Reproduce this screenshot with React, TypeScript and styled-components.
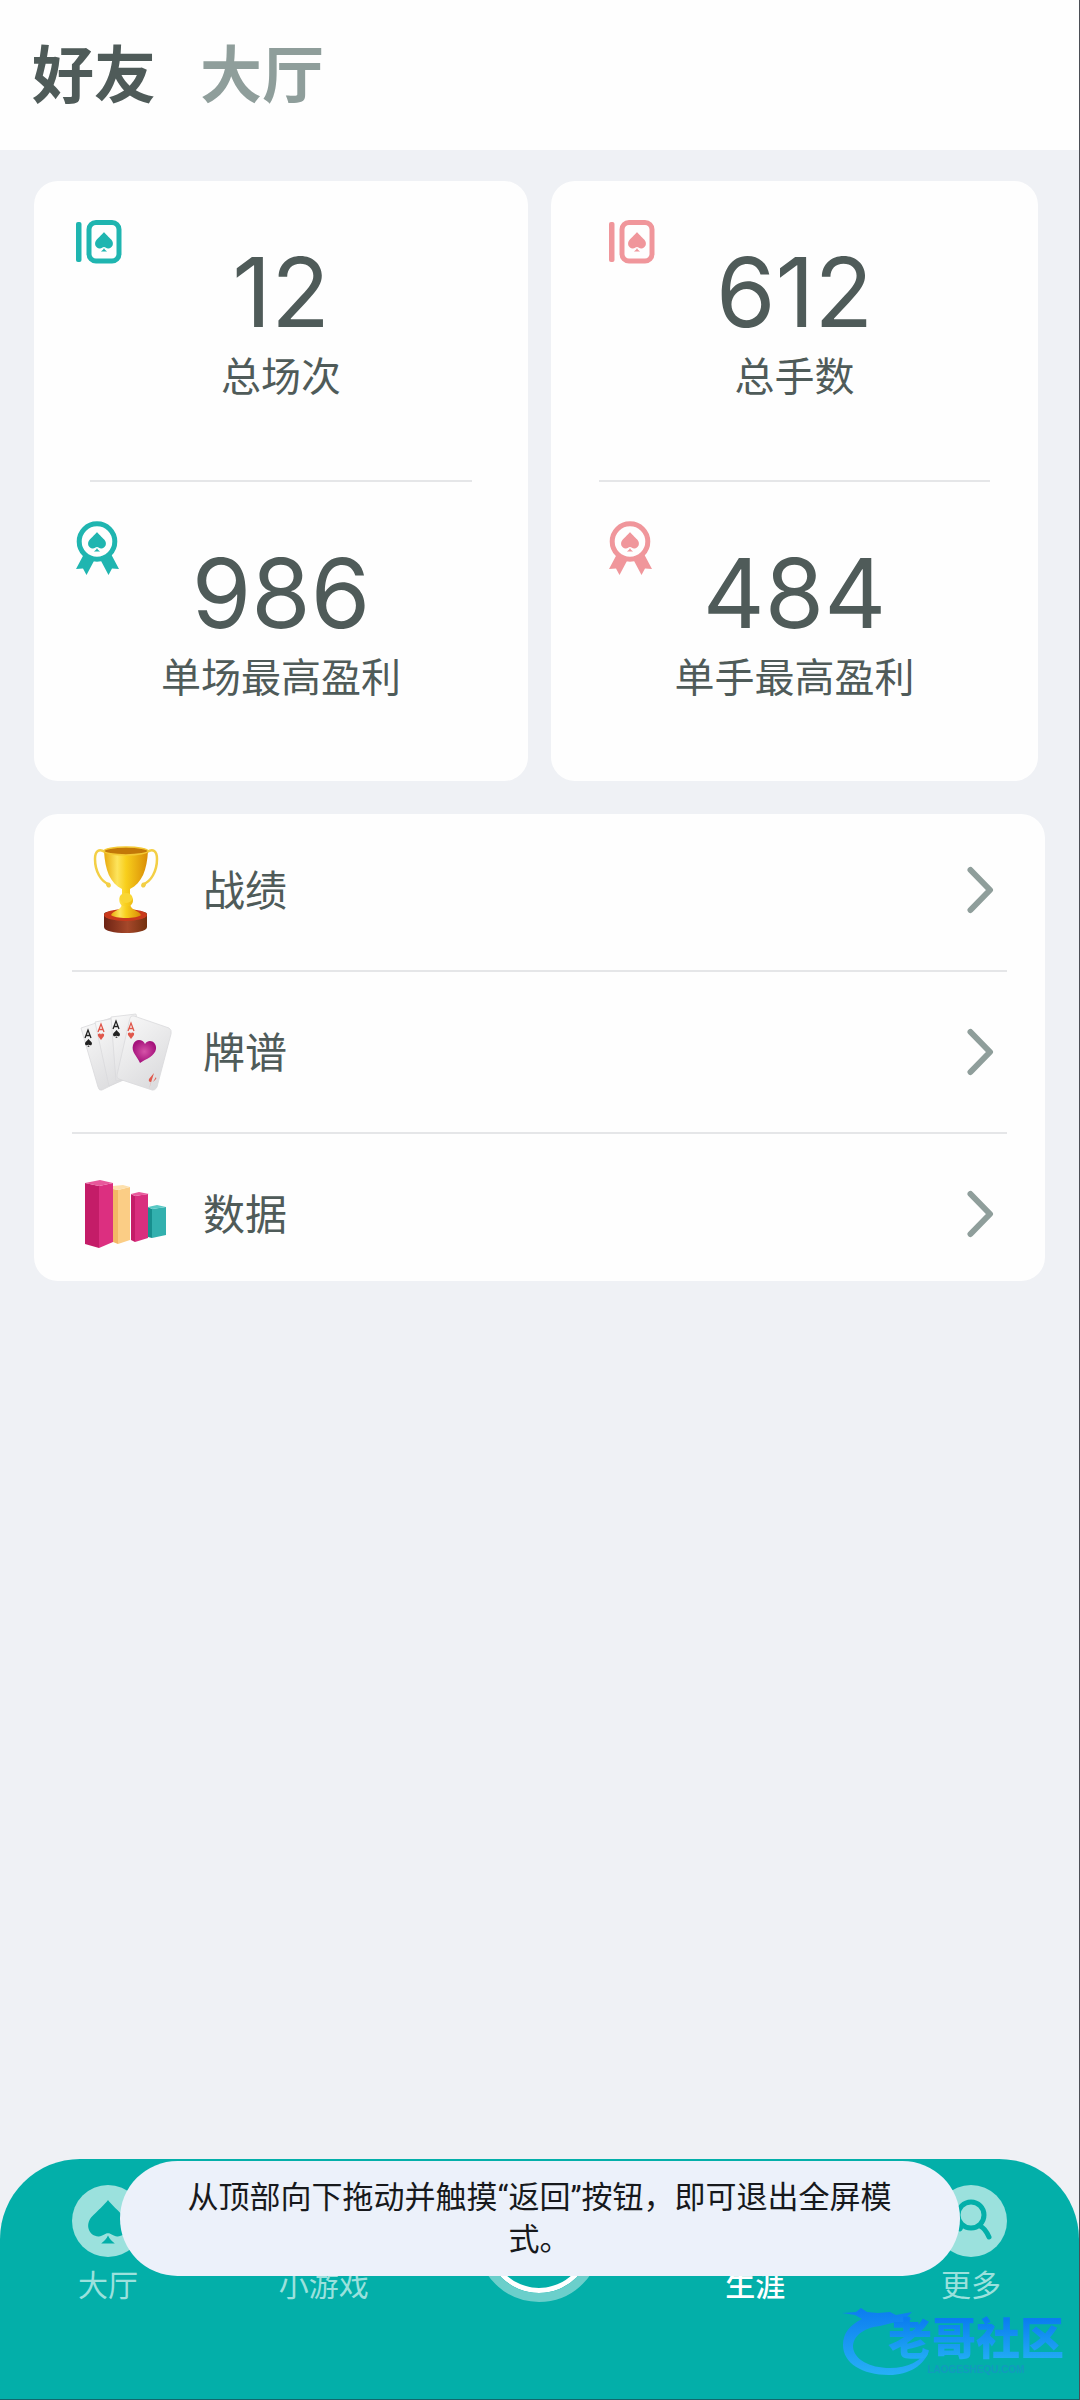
import React from 'react';
import styled, { createGlobalStyle } from 'styled-components';

const cjk = `"Noto Sans CJK SC", sans-serif`;
const ink = '#4f5b59';
const muted = '#8f9e9b';
const teal = '#03afa9';
const mint = '#9be1dd';

const GlobalStyle = createGlobalStyle`
  *, *::before, *::after { box-sizing: border-box; }
  body { margin: 0; background: #eff1f5; font-family: ${cjk}; color: ${ink}; }
  h1, p, ul, dl, dd, dt { margin: 0; padding: 0; font-weight: 400; }
  ul { list-style: none; }
  button { border: 0; padding: 0; background: none; font: inherit; color: inherit; cursor: pointer; }
  svg { display: block; flex: none; }
`;

const Page = styled.div`
  position: relative;
  display: flex;
  flex-direction: column;
  min-height: 100vh;
  border-right: 1px solid #4b4e55;
  background: #eff1f5;
`;

const Header = styled.header`
  display: flex;
  align-items: center;
  gap: 44px;
  height: 150px;
  padding: 0 32px 8px;
  background: #fefefe;
`;

const TopTab = styled.button<{ $active?: boolean }>`
  font-size: 62px;
  line-height: 80px;
  font-weight: 700;
  color: ${p => (p.$active ? ink : muted)};
`;

const Main = styled.main`
  flex: 1;
  padding: 31px 34px;
`;

const Cards = styled.section`
  display: grid;
  grid-template-columns: 494fr 487fr;
  gap: 23px;
  margin-right: 7px;
`;

const Card = styled.dl<{ $iconInset: number; $lineInset: number }>`
  border-radius: 24px;
  background: #fefefe;
  --icon-inset: ${p => p.$iconInset}px;
  --line-inset: ${p => p.$lineInset}px;
`;

const Divider = styled.div`
  height: 2px;
  margin: 0 var(--line-inset);
  background: #e5e6e8;
`;

const Stat = styled.div`
  display: grid;
  height: 299px;
  padding-top: 39px;
`;

const StatIcon = styled.div<{ $color: string }>`
  grid-area: 1 / 1;
  justify-self: start;
  align-self: start;
  padding-left: var(--icon-inset);
  color: ${p => p.$color};
`;

const StatText = styled.div`
  grid-area: 1 / 1;
  display: flex;
  flex-direction: column-reverse;
  justify-content: flex-end;
  align-items: center;
  gap: 8px;
  padding-top: 22px;
`;

const Value = styled.dd`
  font-family: Inter, sans-serif;
  font-size: 96px;
  line-height: 100px;
`;

const Label = styled.dt`
  font-size: 40px;
  line-height: 48px;
`;

const List = styled.ul`
  margin-top: 33px;
  padding: 44px 38px 35px;
  border-radius: 24px;
  background: #fefefe;
`;

const Item = styled.li`
  & + & {
    margin-top: 48px;
    padding-top: 48px;
    border-top: 2px solid #e5e6e8;
  }
`;

const Row = styled.button`
  display: flex;
  align-items: center;
  width: 100%;
  height: 64px;
  padding: 0 13px 0 8px;
  text-align: left;
`;

const Picture = styled.span`
  display: flex;
  align-items: center;
  justify-content: center;
  width: 92px;
`;

const RowText = styled.span`
  flex: 1;
  padding: 0 0 4px 31px;
  font-size: 42px;
  line-height: 60px;
`;

const Nav = styled.nav`
  display: grid;
  grid-template-columns: repeat(5, 1fr);
  align-items: start;
  height: 241px;
  padding-top: 26px;
  border-radius: 80px 80px 0 0;
  border-bottom: 1px solid #14666c;
  background: ${teal};
`;

const NavItem = styled.button<{ $active?: boolean }>`
  display: flex;
  flex-direction: column;
  align-items: center;
  gap: 6px;
  font-size: 30px;
  line-height: 40px;
  font-weight: ${p => (p.$active ? 500 : 400)};
  color: ${p => (p.$active ? '#fff' : mint)};
`;

const PlayButton = styled.button`
  justify-self: center;
  width: 124px;
  height: 124px;
  margin-top: -7px;
  border: 9px solid #6bcfcb;
  border-radius: 50%;
  background: ${teal};
  box-shadow: inset 0 0 0 5px #fff;
`;

const Toast = styled.div`
  position: absolute;
  left: 50%;
  bottom: 124px;
  width: min(840px, 90%);
  transform: translateX(-50%);
  padding: 16px 56px 15px;
  border-radius: 58px;
  background: #ecf1fa;
  color: #17191c;
  font-family: Roboto, ${cjk};
  font-size: 31px;
  line-height: 42px;
  text-align: center;
`;

const Watermark = styled.div`
  position: absolute;
  right: 15px;
  bottom: 24px;
  display: flex;
  align-items: flex-end;
`;

const WatermarkText = styled.div`
  margin-left: -44px;
  text-align: center;
`;

const WatermarkName = styled.p`
  font-size: 44px;
  line-height: 56px;
  font-weight: 900;
  color: transparent;
  background: linear-gradient(#0b7df0 20%, #22aaf4 90%);
  background-clip: text;
`;

const WatermarkSite = styled.p`
  font: 700 10px/12px "Liberation Sans", sans-serif;
  color: #129bbd;
`;

const Spade = ({ x, y, size }: { x: number; y: number; size: number }) => (
  <g transform={`translate(${x} ${y}) scale(${size / 20})`} fill="currentColor">
    <path d="M10 0C11 1.600 16 6.200 18 8.300C22 12.600 19.200 18.400 14.600 18.200C12.500 18 11.600 16.600 10 16.600C8.400 16.600 7.500 18 5.400 18.200C0.800 18.400-2 12.600 2 8.300C4 6.200 9 1.600 10 0Z" />
    <path d="M10 17.800C10.800 19.800 12 20.600 13.400 21.800H6.600C8 20.600 9.200 19.800 10 17.800Z" />
  </g>
);

const DeckIcon = () => (
  <svg width="46" height="44" viewBox="0 0 46 44">
    <rect x="0" y="2" width="5.500" height="40" rx="2" fill="currentColor" />
    <rect x="13" y="2.500" width="30" height="38.500" rx="7" fill="none" stroke="currentColor" strokeWidth="5" />
    <Spade x={19} y={12} size={18} />
  </svg>
);

const MedalIcon = () => (
  <svg width="43" height="54" viewBox="0 0 43 54">
    <path d="M8 33L0 48L7 47.500L10.500 54L19 38ZM35 33L43 48L36 47.500L32.500 54L24 38Z" fill="currentColor" />
    <circle cx="21" cy="20.500" r="17.800" fill="#fefefe" stroke="currentColor" strokeWidth="5" />
    <Spade x={12} y={11} size={18} />
  </svg>
);

const TrophyIcon = () => (
  <svg width="66" height="88" viewBox="0 0 66 88">
    <defs>
      <linearGradient id="gold">
        <stop offset="0" stopColor="#e8a90c" />
        <stop offset=".3" stopColor="#fde45c" />
        <stop offset=".5" stopColor="#f8cf1c" />
        <stop offset="1" stopColor="#d98c06" />
      </linearGradient>
      <linearGradient id="wood">
        <stop offset="0" stopColor="#6d2314" />
        <stop offset=".55" stopColor="#a5482a" />
        <stop offset="1" stopColor="#74300f" />
      </linearGradient>
    </defs>
    <path d="M12 6C6 2 2 5 2 13C2 25 8 36 16 38C18 40 15 42 14 38M54 6C60 2 64 5 64 13C64 25 58 36 50 38C48 40 51 42 52 38" fill="none" stroke="#f3cf45" strokeWidth="2.500" />
    <path d="M11 68C11 63 54 63 54 68V81C54 89 11 89 11 81Z" fill="url(#wood)" />
    <ellipse cx="32.500" cy="69" rx="21.500" ry="6" fill="#c93a1c" />
    <path d="M18 69C20 64 28 65 29 58H37C38 65 46 64 48 69C44 73 22 73 18 69Z" fill="url(#gold)" />
    <path d="M11 5C12 24 17 37 29 43V49C24 53 27 58 29 60H37C40 58 42 53 37 49V43C49 37 54 24 55 5Z" fill="url(#gold)" />
    <ellipse cx="33" cy="52" rx="6.500" ry="5" fill="#f9d634" />
    <ellipse cx="33" cy="5" rx="22" ry="4" fill="#c27808" stroke="#f4c934" strokeWidth="1.500" />
  </svg>
);

const MiniAce = ({ x, y, color, heart }: { x: number; y: number; color: string; heart?: boolean }) => (
  <g transform={`translate(${x} ${y})`} color={color}>
    <path d="M0 8L3 0L6 8M1 5.500H5" fill="none" stroke={color} strokeWidth="1.300" />
    {heart ? <path d="M3 16L0 12C-1 9 3 9 3 11C3 9 7 9 6 12Z" fill={color} /> : <Spade x={0} y={9} size={7} />}
  </g>
);

const CardsIcon = () => (
  <svg width="92" height="78" viewBox="0 0 92 78">
    <defs>
      <linearGradient id="paper" x1="0" y1="0" x2=".6" y2="1">
        <stop offset="0" stopColor="#fafafa" />
        <stop offset="1" stopColor="#dcdcde" />
      </linearGradient>
      <radialGradient id="heart">
        <stop offset="0" stopColor="#d653a8" />
        <stop offset="1" stopColor="#a5127c" />
      </radialGradient>
    </defs>
    <g fill="url(#paper)" stroke="#d9d9dc" strokeWidth=".8">
      <path d="M1 15L31 5L52 62L22 77Q19 78 18 74Z" />
      <path d="M15 9L46 3L56 62L29 73Z" />
      <path d="M31 4L56 1L66 60L36 68Z" />
      <path d="M50 5Q51 2 54 3L89 15Q92 17 91 21L77 74Q75 78 72 77L39 66Q36 65 37 62Z" />
    </g>
    <MiniAce x={5} y={17} color="#222" />
    <MiniAce x={18} y={11} color="#e0574b" heart />
    <MiniAce x={33} y={8} color="#222" />
    <MiniAce x={48} y={10} color="#e0574b" heart />
    <path d="M74 60L69 66Q68 69 71 69L69 76M73 69L75 67Q77 66 76 64Z" fill="#e0574b" />
    <path d="M60 50C57 43 51 39 53 32C55 25 63 26 65 31C69 25 77 29 76 36C75 43 66 46 60 50Z" fill="url(#heart)" />
  </svg>
);

const BarsIcon = () => (
  <svg width="82" height="68" viewBox="0 0 82 68">
    <path d="M0 3L14 6V68L0 64Z" fill="#c41c68" />
    <path d="M14 6L28 3V62L14 68Z" fill="#dc2f80" />
    <path d="M0 3L15 0L28 3L14 6Z" fill="#e8589b" />
    <path d="M28 9L33 10V64L28 62Z" fill="#f3b765" />
    <path d="M33 10L45 7V60L33 64Z" fill="#fbcd85" />
    <path d="M28 6L38 5L45 7L33 10L28 9Z" fill="#fde0ad" />
    <path d="M46 14L50 16V62L46 60Z" fill="#c41c68" />
    <path d="M50 16L63 14V58L50 62Z" fill="#d92e7e" />
    <path d="M46 14L54 12L64 14L50 16Z" fill="#e8589b" />
    <path d="M63 27L67 29V58L63 57Z" fill="#178f8e" />
    <path d="M67 29L81 27V55L67 58Z" fill="#32b0ae" />
    <path d="M63 27L72 25L81 27L67 29Z" fill="#57c8c4" />
  </svg>
);

const Chevron = () => (
  <svg width="27" height="48" viewBox="0 0 27 48" fill="none" stroke={muted} strokeWidth="6" strokeLinecap="round" strokeLinejoin="round">
    <path d="M3.500 4L23 24L3.500 44" />
  </svg>
);

const SpadeBadge = () => (
  <svg width="72" height="72" viewBox="0 0 72 72" color={teal}>
    <circle cx="36" cy="36" r="36" fill={mint} />
    <Spade x={16} y={15} size={40} />
  </svg>
);

const GamepadBadge = () => (
  <svg width="72" height="72" viewBox="0 0 72 72">
    <circle cx="36" cy="36" r="36" fill={mint} />
    <path d="M22 36H34M28 30V42M44 33V33.100M50 39V39.100" stroke={teal} strokeWidth="5" strokeLinecap="round" />
  </svg>
);

const CareerBadge = () => (
  <svg width="72" height="72" viewBox="0 0 72 72">
    <circle cx="36" cy="36" r="36" fill="#fff" />
    <path d="M24 48V36M36 48V24M48 48V30" stroke={teal} strokeWidth="6" strokeLinecap="round" />
  </svg>
);

const SearchBadge = () => (
  <svg width="72" height="72" viewBox="0 0 72 72" fill="none" stroke={teal} strokeWidth="5" strokeLinecap="round">
    <circle cx="36" cy="36" r="36" fill={mint} stroke="none" />
    <circle cx="36" cy="30" r="13" />
    <path d="M27 40L25 44M45 41Q50 43 54 52" />
  </svg>
);

const DragonLogo = () => (
  <svg width="90" height="68" viewBox="0 0 90 68">
    <defs>
      <linearGradient id="dragon" x1="0" y1="0" x2="0" y2="1">
        <stop offset="0" stopColor="#0c7cf0" />
        <stop offset="1" stopColor="#27b0f6" />
      </linearGradient>
    </defs>
    <path d="M0 5L14 4L19 0L25 4L36 5L48 4L54 7L70 4L65 9L70 11L64 13L68 17L57 14L50 15L38 18C20 20 11 29 11 39C12 51 27 60 48 60C66 60 78 53 87 42C83 57 67 67 47 67C20 67 1 55 1 37C1 25 8 17 20 11L13 7Z" fill="url(#dragon)" />
  </svg>
);

const cards = [
  {
    color: '#1fb5b0', icon: 42, line: 56,
    stats: [['12', '总场次'], ['986', '单场最高盈利']],
  },
  {
    color: '#f0969b', icon: 58, line: 48,
    stats: [['612', '总手数'], ['484', '单手最高盈利']],
  },
];

const rows = [
  { text: '战绩', picture: <TrophyIcon /> },
  { text: '牌谱', picture: <CardsIcon /> },
  { text: '数据', picture: <BarsIcon /> },
];

export default function App() {
  return (
    <Page>
      <GlobalStyle />
      <Header>
        <TopTab type="button" $active>好友</TopTab>
        <TopTab type="button">大厅</TopTab>
      </Header>
      <Main>
        <Cards>
          {cards.map(card => (
            <Card key={card.color} $iconInset={card.icon} $lineInset={card.line}>
              {card.stats.map(([value, label], i) => (
                <React.Fragment key={label}>
                  {i > 0 && <Divider role="presentation" />}
                  <Stat>
                    <StatIcon $color={card.color}>{i === 0 ? <DeckIcon /> : <MedalIcon />}</StatIcon>
                    <StatText>
                      <Label>{label}</Label>
                      <Value>{value}</Value>
                    </StatText>
                  </Stat>
                </React.Fragment>
              ))}
            </Card>
          ))}
        </Cards>
        <List>
          {rows.map(row => (
            <Item key={row.text}>
              <Row type="button">
                <Picture>{row.picture}</Picture>
                <RowText>{row.text}</RowText>
                <Chevron />
              </Row>
            </Item>
          ))}
        </List>
      </Main>
      <Nav>
        <NavItem type="button"><SpadeBadge />大厅</NavItem>
        <NavItem type="button"><GamepadBadge />小游戏</NavItem>
        <PlayButton type="button" aria-label="开始" />
        <NavItem type="button" $active><CareerBadge />生涯</NavItem>
        <NavItem type="button"><SearchBadge />更多</NavItem>
      </Nav>
      <Toast role="status">从顶部向下拖动并触摸“返回”按钮，即可退出全屏模式。</Toast>
      <Watermark>
        <DragonLogo />
        <WatermarkText>
          <WatermarkName>老哥社区</WatermarkName>
          <WatermarkSite>LAOGESHEQU.COM</WatermarkSite>
        </WatermarkText>
      </Watermark>
    </Page>
  );
}
